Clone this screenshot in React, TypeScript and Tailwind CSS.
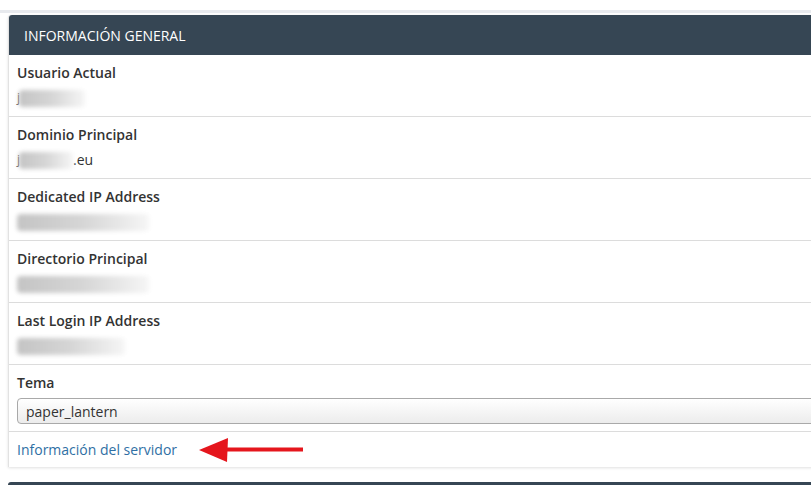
import React from 'react';

interface InfoRow {
  label: string;
  blur: number;
  prefix?: string;
  suffix?: string;
}

const rows: InfoRow[] = [
  { label: 'Usuario Actual', blur: 66, prefix: 'j' },
  { label: 'Dominio Principal', blur: 54, prefix: 'j', suffix: '.eu' },
  { label: 'Dedicated IP Address', blur: 132 },
  { label: 'Directorio Principal', blur: 132 },
  { label: 'Last Login IP Address', blur: 108 },
];

const Blurred: React.FC<{ width: number }> = ({ width }) => (
  <span
    className="inline-block h-[17px] rounded-sm bg-gradient-to-r from-[#c4c4c4] via-[#d6d6d6] to-[#f6f6f6] blur-[2px] align-middle"
    style={{ width }}
  />
);

const Arrow: React.FC = () => (
  <svg width="106" height="26" viewBox="0 0 106 26" className="ml-[22px]">
    <polygon points="0,13 29,1 28,25" fill="#e5161d" />
    <rect x="27" y="10.5" width="77" height="4" fill="#e5161d" />
  </svg>
);

const App: React.FC = () => {
  return (
    <div
      className="w-[811px] h-[485px] overflow-hidden bg-white text-[#333]"
      style={{ fontFamily: '"Open Sans", "Noto Sans", sans-serif' }}
    >
      <div className="h-[10px]" />
      <div className="h-[3px] bg-[#e8eaee]" />
      <div className="h-[2px]" />

      <div className="ml-[8px] w-[830px] rounded-t-[3px] border-l border-[#e2e2e2] bg-white shadow-[0_1px_3px_rgba(0,0,0,0.12)]">
        <div className="flex h-[40px] items-center rounded-t-[3px] bg-[#364654] pl-[15px] text-[14px] text-white">
          INFORMACIÓN GENERAL
        </div>

        {rows.map((row) => (
          <div key={row.label} className="border-b border-[#dcdcdc] px-[8px] py-[8px]">
            <div className="text-[14px] font-semibold leading-5">{row.label}</div>
            <div className="mt-[5px] flex h-5 items-center text-[14px] leading-5">
              {row.prefix && <span className="text-[12px] -mr-[1px] text-[#555]">{row.prefix}</span>}
              <Blurred width={row.blur} />
              {row.suffix && <span>{row.suffix}</span>}
            </div>
          </div>
        ))}

        <div className="border-b border-[#dcdcdc] px-[8px] pt-[8px] pb-[7px]">
          <div className="text-[14px] font-semibold leading-5">Tema</div>
          <div className="mt-[5px] flex h-[26px] items-center rounded-[4px] border border-[#a9a9a9] bg-gradient-to-b from-white to-[#ececec] pl-[8px] text-[14px]">
            paper_lantern
          </div>
        </div>

        <div className="flex h-[35px] items-center px-[8px]">
          <a href="#" className="text-[14px] text-[#2f6fa4]">
            Información del servidor
          </a>
          <Arrow />
        </div>
      </div>

      <div className="mt-[15px] ml-[8px] h-[20px] w-[830px] rounded-t-[3px] bg-[#364654]" />
    </div>
  );
};

export default App;
